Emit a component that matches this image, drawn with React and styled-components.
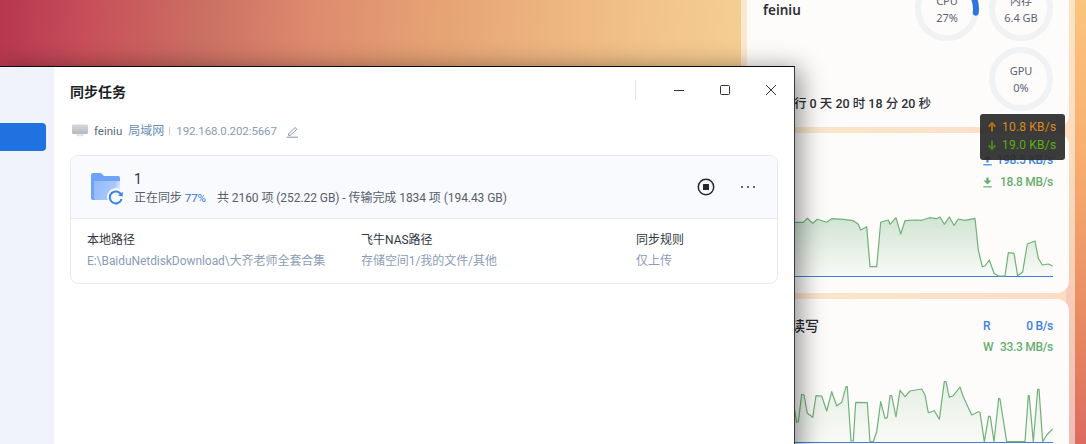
import React from "react";
import styled, { createGlobalStyle } from "styled-components";

const Global = createGlobalStyle`
  html, body { margin: 0; padding: 0; background: #e9a070; }
  body { font-family: Roboto, "Noto Sans CJK SC", sans-serif; }
  * { box-sizing: border-box; }
`;

const Desktop = styled.div`
  position: relative;
  width: 1086px;
  height: 444px;
  overflow: hidden;
  background:
    linear-gradient(180deg, #fcc47c 0%, #f8ae6f 35%, #ea8f62 68%, #dd6b5e 100%) right top / 20px 100% no-repeat,
    linear-gradient(96deg, #b6364f 0%, #c84f5a 8%, #cb6f62 18%, #de8b6e 28%, #e5a173 38%, #ecb37f 48%, #f2c48b 58%, #f5cd92 66%, #f8b078 100%);
`;

const WidgetPanel = styled.aside`
  position: absolute;
  left: 741px;
  top: -40px;
  width: 334px;
  height: 520px;
  padding: 0 6px;
  display: flex;
  flex-direction: column;
  gap: 6px;
  background: rgba(255, 255, 255, 0.55);
`;

const Card = styled.section`
  background: #fefcfb;
  border-radius: 12px;
  padding: ${(p) => p.$pad};
  height: ${(p) => p.$h}px;
  flex: none;
`;

const OverviewBody = styled.div`
  display: flex;
  justify-content: space-between;
  height: 134px;
`;

const OverviewLeft = styled.div`
  flex: none;
  width: 140px;
  display: flex;
  flex-direction: column;
  justify-content: space-between;
`;

const HostName = styled.div`
  margin-top: 24px;
  font-family: "Noto Sans", sans-serif;
  font-size: 13.5px;
  font-weight: 600;
  line-height: 18px;
  color: #2b2f36;
`;

const Uptime = styled.div`
  margin: 0 0 -2px 6px;
  font-size: 12.5px;
  font-weight: 500;
  line-height: 18px;
  color: #2b2f36;
  white-space: nowrap;
`;

const RingGrid = styled.div`
  flex: none;
  display: grid;
  grid-template-columns: 64px 64px;
  grid-auto-rows: 64px;
  gap: 6px 10px;
`;

const GpuSlot = styled.div`
  grid-column: 2;
`;

const RingBox = styled.div`
  display: grid;
  width: 64px;
  height: 64px;
  & > * { grid-area: 1 / 1; }
`;

const RingText = styled.div`
  display: flex;
  flex-direction: column;
  align-items: center;
  justify-content: center;
  font-family: "Noto Sans", "Noto Sans CJK SC", sans-serif;
  font-size: 11px;
  line-height: 17px;
  color: #5a6272;
`;

function Ring({ label, value, pct }) {
  const r = 29;
  const c = 2 * Math.PI * r;
  return (
    <RingBox>
      <svg width="64" height="64" viewBox="0 0 64 64">
        <circle cx="32" cy="32" r={r} fill="none" stroke="#f1f2f3" strokeWidth="6" />
        {pct > 0 && (
          <circle
            cx="32"
            cy="32"
            r={r}
            fill="none"
            stroke="#2f74e0"
            strokeWidth="6"
            strokeLinecap="round"
            strokeDasharray={`${c * pct} ${c}`}
            transform="rotate(-90 32 32)"
          />
        )}
      </svg>
      <RingText>
        <span>{label}</span>
        <span>{value}</span>
      </RingText>
    </RingBox>
  );
}

const StatHead = styled.div`
  display: flex;
  justify-content: space-between;
  align-items: flex-start;
`;

const PanelTitle = styled.div`
  font-size: 14px;
  line-height: 18px;
  font-weight: 500;
  color: #26292f;
`;

const StatColumn = styled.div`
  display: flex;
  flex-direction: column;
  align-items: flex-end;
  gap: ${(p) => p.$gap}px;
  margin-left: auto;
`;

const StatRow = styled.div`
  width: 70px;
  display: flex;
  justify-content: space-between;
  align-items: center;
  font-size: 12px;
  letter-spacing: -0.3px;
  line-height: 18px;
  font-weight: 500;
  white-space: nowrap;
  color: ${(p) => p.$color};
`;

const ChartSvg = styled.svg`
  display: block;
  margin-top: ${(p) => p.$top}px;
`;

const netPts = [[-90,277],[0,277],[40,277],[52,265],[68,280],[82,268],[110,277],[125,266],[160,268],[190,272],[205,283],[212,300],[230,290],[240,410],[260,410],[272,277],[295,270],[300,283],[318,263],[332,312],[345,272],[375,270],[395,271],[418,263],[440,266],[450,261],[463,283],[478,261],[492,286],[505,267],[525,271],[555,265],[565,360],[577,410],[585,408],[598,390],[612,430],[625,438],[645,438],[655,368],[672,370],[683,438],[698,425],[712,342],[735,333],[745,385],[757,405],[775,402],[788,408]];
const diskPts = [[-80,380],[12,365],[20,412],[25,410],[35,328],[42,330],[52,385],[68,397],[78,332],[95,333],[110,378],[125,320],[140,363],[155,352],[168,305],[172,305],[183,468],[190,468],[197,352],[232,353],[240,470],[250,470],[260,440],[272,350],[285,400],[292,398],[300,332],[305,332],[318,396],[330,316],[345,335],[360,318],[395,312],[405,330],[415,383],[433,377],[448,403],[463,290],[468,290],[478,337],[490,332],[510,306],[520,335],[545,390],[565,380],[570,382],[583,470],[596,393],[601,395],[612,470],[626,340],[630,342],[650,470],[705,470],[715,332],[718,332],[730,470],[743,313],[747,313],[758,470],[770,450],[788,432]];

function Chart({ id, pts, originY, svgTop, height, baseY, top, strength }) {
  const mapped = pts.map(([x, y]) => [27 + x / 3, originY + y / 3 - svgTop]);
  const line = mapped.map(([x, y]) => `${x.toFixed(1)},${y.toFixed(1)}`).join(" ");
  const base = baseY - svgTop;
  const area = `0,${base} ${line} 290,${base}`;
  return (
    <ChartSvg $top={top} width="290" height={height} viewBox={`0 0 290 ${height}`}>
      <defs>
        <linearGradient id={id} x1="0" y1="0" x2="0" y2="1">
          <stop offset="0" stopColor="#6fb27a" stopOpacity={strength} />
          <stop offset="1" stopColor="#6fb27a" stopOpacity="0.03" />
        </linearGradient>
      </defs>
      <polygon points={area} fill={`url(#${id})`} />
      <line x1="0" x2="290" y1={base} y2={base} stroke="#3b82e0" strokeWidth="1" />
      <polyline points={line} fill="none" stroke="#6fb178" strokeWidth="1.2" strokeLinejoin="round" />
    </ChartSvg>
  );
}

const BarArrow = ({ up }) => (
  <svg width="9" height="11" viewBox="0 0 9 11">
    <path
      d={up ? "M4.5 0.5 L8.5 4.5 H5.6 V7.5 H3.4 V4.5 H0.5 Z" : "M3.4 0.5 H5.6 V3.6 H8.5 L4.5 7.6 L0.5 3.6 H3.4 Z"}
      fill="currentColor"
    />
    <rect x="0.3" y="9.2" width="8.4" height="1.2" fill="currentColor" />
  </svg>
);

const Speed = styled.aside`
  position: absolute;
  left: 980px;
  top: 114px;
  width: 85px;
  height: 46px;
  border-radius: 3px;
  background: rgba(44, 44, 44, 0.93);
  padding: 4px 0 0 8px;
  display: flex;
  flex-direction: column;
`;

const SpeedRow = styled.div`
  display: flex;
  align-items: center;
  gap: 6px;
  height: 18px;
  font-size: 12px;
  letter-spacing: 0.2px;
  white-space: nowrap;
  color: ${(p) => p.$color};
  & svg { color: ${(p) => p.$arrow}; flex: none; }
`;

const ThinArrow = ({ up }) => (
  <svg width="8" height="10" viewBox="0 0 8 10">
    <path
      d={up ? "M4 9.5 V1.5 M0.8 4.6 L4 1 L7.2 4.6" : "M4 0.5 V8.5 M0.8 5.4 L4 9 L7.2 5.4"}
      fill="none"
      stroke="currentColor"
      strokeWidth="1.8"
    />
  </svg>
);

const Window = styled.main`
  position: absolute;
  left: 0;
  top: 66px;
  width: 795px;
  height: 400px;
  display: flex;
  background: #fff;
  border-top: 1px solid #0c0c0c;
  border-right: 1px solid #3a3a3a;
  box-shadow: 5px 3px 24px rgba(0, 0, 0, 0.45);
`;

const Sidebar = styled.nav`
  width: 54px;
  flex: none;
  background: #f0f3f9;
  padding-top: 56px;
`;

const NavActive = styled.div`
  width: 46px;
  height: 28px;
  background: #2072e0;
  border-radius: 0 4px 4px 0;
`;

const Content = styled.div`
  flex: 1;
  min-width: 0;
  display: flex;
  flex-direction: column;
`;

const TitleBar = styled.header`
  height: 46px;
  display: flex;
  align-items: center;
  padding-left: 16px;
`;

const Title = styled.h1`
  margin: 4px auto 0 0;
  font-size: 14px;
  font-weight: 700;
  line-height: 18px;
  color: #1c1f26;
`;

const TitleDivider = styled.div`
  width: 1px;
  height: 20px;
  margin-right: 20px;
  background: #e6e6e8;
`;

const WinButton = styled.button`
  width: 46px;
  height: 46px;
  padding: 0;
  border: 0;
  background: none;
  display: flex;
  align-items: center;
  justify-content: center;
  color: #333;
`;

const HostRow = styled.div`
  margin: 8px 0 0 18px;
  height: 20px;
  display: flex;
  align-items: center;
  font-size: 11.5px;
  line-height: 20px;
  color: #5f6a7c;
`;

const HostLabel = styled.span`
  margin-left: 6px;
`;

const HostLink = styled.span`
  margin-left: 6px;
  font-size: 12px;
  color: #6a8db8;
`;

const HostSep = styled.span`
  width: 1px;
  height: 8px;
  margin: 0 6px 0 5px;
  background: #c4cedd;
`;

const HostIp = styled.span`
  letter-spacing: -0.1px;
  color: #8a9ab3;
`;

const EditIcon = styled.svg`
  margin-left: 9px;
`;

const TaskCard = styled.article`
  margin: 14px 0 0 16px;
  width: 708px;
  height: 129px;
  border: 1px solid #e7eaf2;
  border-radius: 8px;
  overflow: hidden;
`;

const TaskHead = styled.div`
  height: 63px;
  padding-left: 20px;
  background: #f9fafd;
  border-bottom: 1px solid #e7eaf2;
  display: flex;
  align-items: center;
`;

const TaskInfo = styled.div`
  margin: 2px 0 0 9px;
  display: flex;
  flex-direction: column;
`;

const TaskName = styled.div`
  font-size: 14px;
  line-height: 18px;
  color: #30343c;
`;

const TaskStatus = styled.div`
  margin-top: 1px;
  font-size: 12px;
  letter-spacing: -0.06px;
  line-height: 18px;
  color: #565e6c;
  white-space: nowrap;
`;

const Percent = styled.span`
  margin: 0 11px 0 3px;
  font-size: 11.5px;
  color: #2f74e0;
`;

const TaskActions = styled.div`
  margin-left: auto;
  margin-right: 21px;
  display: flex;
  align-items: center;
  gap: 25px;
`;

const TaskBody = styled.div`
  display: grid;
  grid-template-columns: 274px 275px 1fr;
  padding: 12px 16px 0;
`;

const Field = styled.div`
  display: flex;
  flex-direction: column;
  gap: 2px;
  white-space: nowrap;
`;

const FieldLabel = styled.div`
  font-size: 12px;
  line-height: 18px;
  color: #33373f;
`;

const FieldValue = styled.div`
  margin-top: 1px;
  font-size: 12px;
  letter-spacing: -0.06px;
  line-height: 18px;
  color: #8b9cb8;
`;

const FolderSvg = styled.svg`
  flex: none;
  margin-top: 4px;
`;

const FolderIcon = () => (
  <FolderSvg width="34" height="34" viewBox="0 0 34 34">
    <defs>
      <linearGradient id="folderFront" x1="0" y1="0" x2="1" y2="0.25">
        <stop offset="0" stopColor="#93b9fb" />
        <stop offset="0.8" stopColor="#a9c8fc" />
        <stop offset="1" stopColor="#dbe7fd" />
      </linearGradient>
    </defs>
    <path d="M0 3 Q0 1 2 1 H10 L13 4 H27 Q29 4 29 6 V26 Q29 28 27 28 H2 Q0 28 0 26 Z" fill="#6ea3f8" />
    <path d="M3 9 H29 V28 H5 Q3 28 3 26 Z" fill="url(#folderFront)" />
    <circle cx="25" cy="25" r="9" fill="#f9fafd" />
    <path d="M30.3 23 A6 6 0 1 0 30.6 27" fill="none" stroke="#3a86e8" strokeWidth="2" />
    <path d="M27 23.6 L31.6 24.4 L32 19.8 Z" fill="#3a86e8" />
  </FolderSvg>
);

const StopIcon = () => (
  <svg width="18" height="18" viewBox="0 0 18 18">
    <circle cx="9" cy="9" r="7.7" fill="none" stroke="#23262c" strokeWidth="1.5" />
    <rect x="6" y="6" width="6" height="6" rx="0.5" fill="#23262c" />
  </svg>
);

const MoreIcon = () => (
  <svg width="16" height="4" viewBox="0 0 16 4">
    <circle cx="2" cy="2" r="1" fill="#333" />
    <circle cx="8" cy="2" r="1" fill="#333" />
    <circle cx="14" cy="2" r="1" fill="#333" />
  </svg>
);

const MonitorIcon = () => (
  <svg width="16" height="14" viewBox="0 0 16 14">
    <defs>
      <linearGradient id="screen" x1="0" y1="0" x2="0" y2="1">
        <stop offset="0" stopColor="#d8dade" />
        <stop offset="1" stopColor="#b4b8be" />
      </linearGradient>
    </defs>
    <rect x="0" y="0.5" width="16" height="9.5" rx="1.2" fill="url(#screen)" />
    <rect x="4.5" y="10" width="7" height="2.2" fill="#e3e5e8" />
  </svg>
);

export default function App() {
  return (
    <Desktop>
      <Global />
      <WidgetPanel>
        <Card $pad="17px 16px 15px 16px" $h={167}>
          <OverviewBody>
            <OverviewLeft>
              <HostName>feiniu</HostName>
              <Uptime>已运行 0 天 20 时 18 分 20 秒</Uptime>
            </OverviewLeft>
            <RingGrid>
              <Ring label="CPU" value="27%" pct={0.27} />
              <Ring label="内存" value="6.4 GB" pct={0} />
              <GpuSlot>
                <Ring label="GPU" value="0%" pct={0} />
              </GpuSlot>
            </RingGrid>
          </OverviewBody>
        </Card>
        <Card $pad="18px 16px 0" $h={160}>
          <StatColumn $gap={4}>
            <StatRow $color="#3b82e0">
              <BarArrow up />
              <span>198.5 KB/s</span>
            </StatRow>
            <StatRow $color="#66ad70">
              <BarArrow />
              <span>18.8 MB/s</span>
            </StatRow>
          </StatColumn>
          <Chart id="netFill" pts={netPts} originY={130} svgTop={215} height={63} baseY={276.5} top={24} strength={0.32} />
        </Card>
        <Card $pad="18px 16px 0" $h={200}>
          <StatHead>
            <PanelTitle>磁盘读写</PanelTitle>
            <StatColumn $gap={3}>
              <StatRow $color="#3b82e0">
                <span>R</span>
                <span>0 B/s</span>
              </StatRow>
              <StatRow $color="#66ad70">
                <span>W</span>
                <span>33.3 MB/s</span>
              </StatRow>
            </StatColumn>
          </StatHead>
          <Chart id="diskFill" pts={diskPts} originY={285} svgTop={375} height={69} baseY={442.5} top={19} strength={0.18} />
        </Card>
      </WidgetPanel>

      <Speed>
        <SpeedRow $color="#d98b22" $arrow="#b8720f">
          <ThinArrow up />
          <span>10.8 KB/s</span>
        </SpeedRow>
        <SpeedRow $color="#5cb012" $arrow="#4c8a1c">
          <ThinArrow />
          <span>19.0 KB/s</span>
        </SpeedRow>
      </Speed>

      <Window>
        <Sidebar>
          <NavActive />
        </Sidebar>
        <Content>
          <TitleBar>
            <Title>同步任务</Title>
            <TitleDivider />
            <WinButton aria-label="minimize">
              <svg width="12" height="12" viewBox="0 0 12 12">
                <path d="M1 6.5 H11" stroke="#333" strokeWidth="1" />
              </svg>
            </WinButton>
            <WinButton aria-label="maximize">
              <svg width="12" height="12" viewBox="0 0 12 12">
                <rect x="1.5" y="1.5" width="9" height="9" rx="1" fill="none" stroke="#333" strokeWidth="1" />
              </svg>
            </WinButton>
            <WinButton aria-label="close">
              <svg width="12" height="12" viewBox="0 0 12 12">
                <path d="M1 1 L11 11 M11 1 L1 11" stroke="#333" strokeWidth="1" />
              </svg>
            </WinButton>
          </TitleBar>
          <HostRow>
            <MonitorIcon />
            <HostLabel>feiniu</HostLabel>
            <HostLink>局域网</HostLink>
            <HostSep />
            <HostIp>192.168.0.202:5667</HostIp>
            <EditIcon width="13" height="13" viewBox="0 0 13 13">
              <path d="M2.5 9 L9 2.5 L10.8 4.3 L4.3 10.3 H2.5 Z M0.8 12.2 H12" fill="none" stroke="#8a93a8" strokeWidth="1" />
            </EditIcon>
          </HostRow>
          <TaskCard>
            <TaskHead>
              <FolderIcon />
              <TaskInfo>
                <TaskName>1</TaskName>
                <TaskStatus>
                  正在同步
                  <Percent>77%</Percent>
                  共 2160 项 (252.22 GB) - 传输完成 1834 项 (194.43 GB)
                </TaskStatus>
              </TaskInfo>
              <TaskActions>
                <StopIcon />
                <MoreIcon />
              </TaskActions>
            </TaskHead>
            <TaskBody>
              <Field>
                <FieldLabel>本地路径</FieldLabel>
                <FieldValue>E:\BaiduNetdiskDownload\大齐老师全套合集</FieldValue>
              </Field>
              <Field>
                <FieldLabel>飞牛NAS路径</FieldLabel>
                <FieldValue>存储空间1/我的文件/其他</FieldValue>
              </Field>
              <Field>
                <FieldLabel>同步规则</FieldLabel>
                <FieldValue>仅上传</FieldValue>
              </Field>
            </TaskBody>
          </TaskCard>
        </Content>
      </Window>
    </Desktop>
  );
}
